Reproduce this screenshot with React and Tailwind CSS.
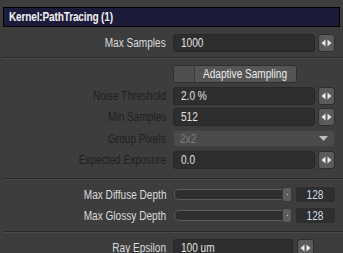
import React from 'react';

const font = { fontFamily: '"Liberation Sans", Arial, sans-serif' };

// The panel font is a narrow one; squeeze Liberation Sans to match
const Narrow = ({ children, origin = 'origin-left' }) => (
  <span className={`inline-block whitespace-nowrap scale-x-[0.84] ${origin}`}>{children}</span>
);

// Little left/right arrow button used by numeric fields
const Arrows = () => (
  <div className="w-[17px] h-[18px] rounded-[3px] bg-[#5b5b5b] border border-[#2e2e2e] flex items-center justify-center">
    <svg width="11" height="8" viewBox="0 0 11 8">
      <polygon points="4.5,0.5 4.5,7.5 0.5,4" fill="#e6e6e6" />
      <polygon points="6.5,0.5 6.5,7.5 10.5,4" fill="#e6e6e6" />
    </svg>
  </div>
);

const Label = ({ children, dim }) => (
  <div className={`w-[166px] shrink-0 text-right text-[12px] leading-none ${dim ? 'text-[#202020]' : 'text-[#dcdcdc]'}`}>
    <Narrow origin="origin-right">{children}</Narrow>
  </div>
);

const NumField = ({ label, value, dim, width = 'w-[142px]', gap = 'gap-[3px]', mt }) => (
  <div className={`flex items-center h-[18px] ${mt}`}>
    <Label dim={dim}>{label}</Label>
    <div className={`ml-[7px] flex items-center ${gap}`}>
      <div className={`${width} h-[18px] rounded-[3px] bg-[#2e2e2e] border border-[#282828] flex items-center pl-[7px] text-[12px] text-[#e4e4e4]`}>
        <Narrow>{value}</Narrow>
      </div>
      <Arrows />
    </div>
  </div>
);

const SliderRow = ({ label, value, mt }) => (
  <div className={`flex items-center h-[15px] ${mt}`}>
    <Label>{label}</Label>
    <div className="ml-[8px] flex items-center">
      <div className="w-[118px] h-[11px] rounded-[5px] bg-[#2f2f2f] border border-[#5c5c5c] flex justify-end items-center">
        <div className="w-[10px] h-[15px] -mr-[1px] rounded-[3px] bg-[#5e5e5e] border border-[#3a3a3a] flex items-center justify-center">
          <div className="w-[1px] h-[1px] bg-[#cfcfcf]" />
        </div>
      </div>
      <div className="ml-[4px] w-[39px] h-[15px] rounded-[3px] bg-[#2e2e2e] flex items-center justify-center text-[12px] text-[#cfdcf0]">
        <Narrow origin="origin-center">{value}</Narrow>
      </div>
    </div>
  </div>
);

const Separator = ({ mt }) => (
  <div className={`ml-[3px] h-[2px] border-t border-[#2a2a2a] border-b border-b-[#4a4a4a] ${mt}`} />
);

export default function App() {
  return (
    <div className="w-[343px] h-[253px] overflow-hidden bg-[#3d3d3d] flex flex-col" style={font}>
      {/* Panel title */}
      <div className="mt-[7px] mx-[3px] h-[20px] border border-black bg-[#1d1b3a] flex items-center pl-[5px]">
        <span className="text-[12px] font-bold text-[#f2f2f2] tracking-[-0.2px]">
          <Narrow>Kernel:PathTracing (1)</Narrow>
        </span>
      </div>

      <NumField label="Max Samples" value="1000" mt="mt-[7px]" />
      <Separator mt="mt-[5px]" />

      {/* Adaptive sampling toggle */}
      <div className="mt-[6px] ml-[173px] w-[124px] h-[18px] rounded-[3px] bg-[#555555] border border-[#2f2f2f] flex">
        <div className="w-[21px] h-full border-r border-[#3a3a3a] bg-[#4f4f4f]" />
        <div className="flex-1 flex items-center justify-center text-[12px] text-[#ececec]">
          <Narrow origin="origin-center">Adaptive Sampling</Narrow>
        </div>
      </div>

      <NumField label="Noise Threshold" value="2.0 %" dim mt="mt-[4px]" />
      <NumField label="Min Samples" value="512" dim mt="mt-[3px]" />

      {/* Group pixels dropdown (disabled) */}
      <div className="flex items-center h-[17px] mt-[4px]">
        <Label dim>Group Pixels</Label>
        <div className="ml-[7px] w-[162px] h-[17px] rounded-[3px] bg-[#4b4b4b] border border-[#404040] flex items-center justify-between pl-[6px] pr-[6px] text-[12px] text-[#7c7c7c]">
          <Narrow>2x2</Narrow>
          <svg width="9" height="5" viewBox="0 0 9 5"><polygon points="0,0 9,0 4.5,5" fill="#bdbdbd" /></svg>
        </div>
      </div>

      <NumField label="Expected Exposure" value="0.0" dim mt="mt-[4px]" />
      <Separator mt="mt-[9px]" />

      <SliderRow label="Max Diffuse Depth" value="128" mt="mt-[7px]" />
      <SliderRow label="Max Glossy Depth" value="128" mt="mt-[6px]" />
      <Separator mt="mt-[8px]" />

      <NumField label="Ray Epsilon" value="100 um" width="w-[120px]" gap="gap-[4px]" mt="mt-[6px]" />
    </div>
  );
}
